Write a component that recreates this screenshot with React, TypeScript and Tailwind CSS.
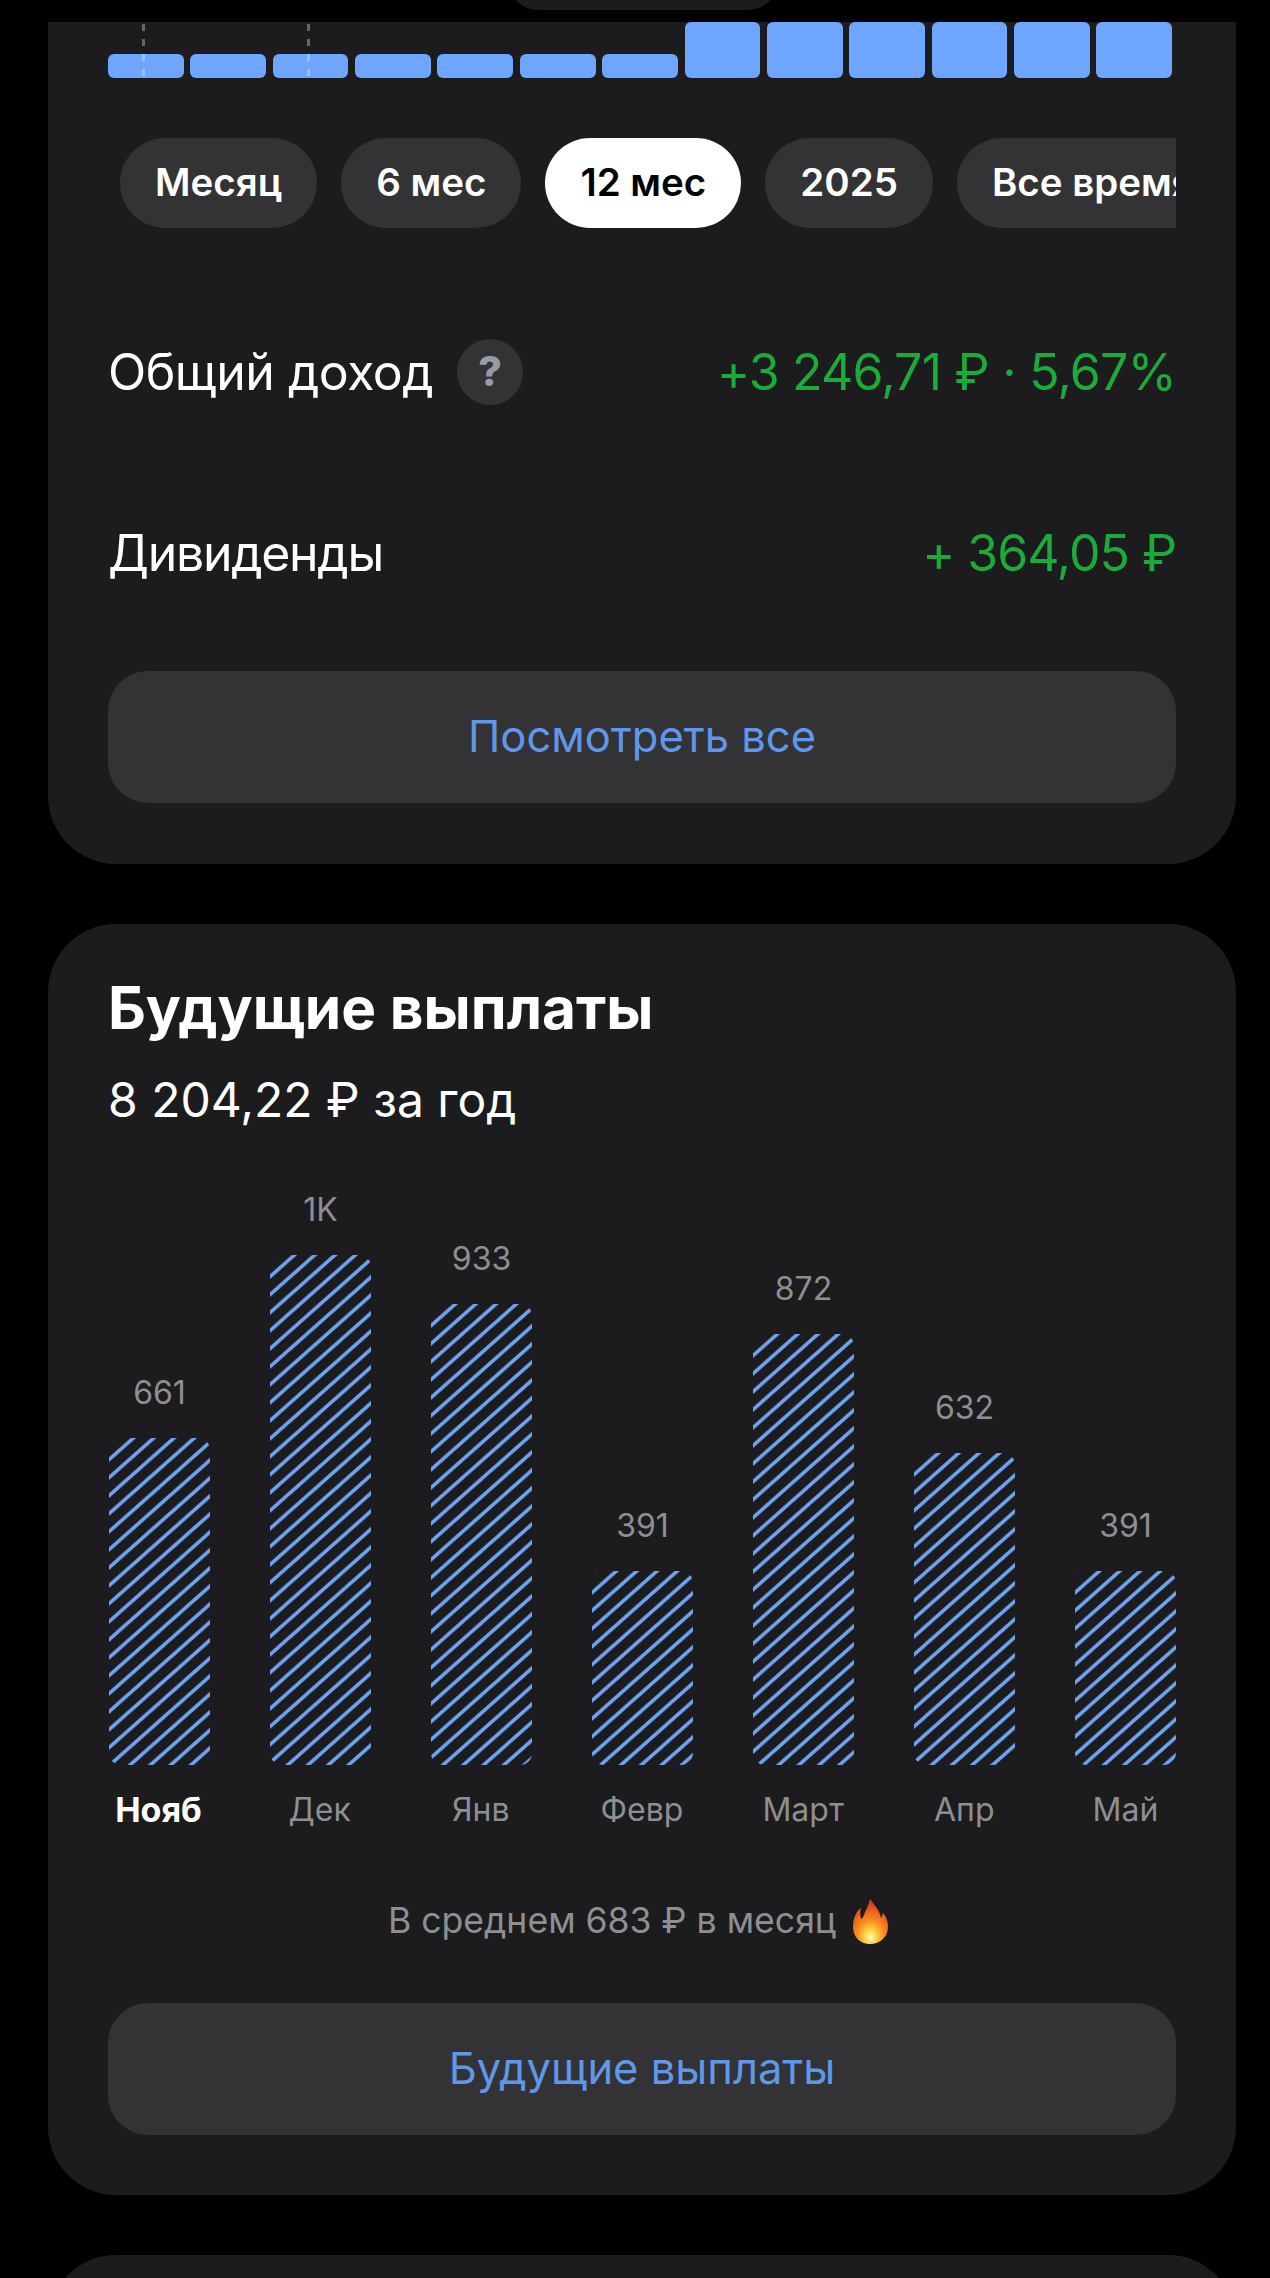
const chart = [
  { value: "661", month: "Нояб", height: 327, active: true },
  { value: "1K", month: "Дек", height: 510 },
  { value: "933", month: "Янв", height: 461 },
  { value: "391", month: "Февр", height: 194 },
  { value: "872", month: "Март", height: 431 },
  { value: "632", month: "Апр", height: 312 },
  { value: "391", month: "Май", height: 194 },
];

const periods = ["Месяц", "6 мес", "12 мес", "2025", "Все время"];

const HatchedBar = ({ height, id }: { height: number; id: string }) => (
  <svg width="101" height={height} viewBox={`0 0 101 ${height}`} className="rounded-[12px]">
    <defs>
      <pattern id={id} patternUnits="userSpaceOnUse" width="20.3" height="18">
        <line x1="-5" y1="8.13" x2="10" y2="-5.17" stroke="#6ea3f0" strokeWidth="3.6" />
        <line x1="-5" y1="26.13" x2="25" y2="-0.48" stroke="#6ea3f0" strokeWidth="3.6" />
      </pattern>
    </defs>
    <rect width="101" height={height} fill={`url(#${id})`} />
  </svg>
);

const FireIcon = () => (
  <svg width="37" height="45" viewBox="0 0 37 45">
    <defs>
      <radialGradient id="flame" cx="50%" cy="85%" r="78%">
        <stop offset="0%" stopColor="#fff8d0" />
        <stop offset="18%" stopColor="#ffdc4a" />
        <stop offset="48%" stopColor="#fb8f1f" />
        <stop offset="100%" stopColor="#d93a1c" />
      </radialGradient>
    </defs>
    <path
      d="M18 0c-1 5-3 9-5 13-1 3-2 6-4 7-1-3-1-7 0-11-5 3-8 11-8 19 0 10 7 17 17 17s18-7 18-17c0-6-2-11-5-14-1 2-1 4-2 5-1-7-6-12-11-19z"
      fill="url(#flame)"
    />
  </svg>
);

const DashLine = ({ className }: { className: string }) => (
  <svg width="3" height="54" className={className}>
    <line x1="1.5" y1="0" x2="1.5" y2="54" stroke="#ffffff" strokeOpacity="0.32" strokeWidth="3" strokeDasharray="7 8" />
  </svg>
);

const ActionButton = ({ label }: { label: string }) => (
  <div className="flex h-[132px] items-center justify-center rounded-[40px] bg-[#333336] text-[43.5px] text-[#5f97ea]">
    {label}
  </div>
);

export default function App() {
  return (
    <div className="h-[2278px] w-[1270px] overflow-hidden bg-black font-['Inter',sans-serif] text-white">
      <div className="-mt-[50px] ml-[508px] h-[60px] w-[270px] rounded-[34px] bg-[#1c1c1e]" />

      <section className="mt-[12px] mr-[34px] ml-12 h-[842px] rounded-b-[68px] bg-[#1c1c1e] px-[60px]">
        <div className="relative mr-[4px] flex h-[56px] items-end gap-[6.6px]">
          {Array.from({ length: 13 }, (_, i) => (
            <div
              key={i}
              className={`flex-1 rounded-[6px] bg-[#6ea5ff] ${i < 7 ? "h-[24px]" : "h-[56px]"}`}
            />
          ))}
          <DashLine className="absolute top-[2px] left-[34px]" />
          <DashLine className="absolute top-[2px] left-[199px]" />
        </div>

        <div className="mt-[60px] flex h-[90px] gap-[24px] overflow-hidden pl-[12px]">
          {periods.map((period) => (
            <div
              key={period}
              className={`flex shrink-0 items-center rounded-[45px] px-[35px] text-[38.5px] font-semibold ${
                period === "12 мес" ? "bg-white text-black" : "bg-[#333336] text-white"
              }`}
            >
              {period}
            </div>
          ))}
        </div>

        <div className="mt-[111px] flex h-[66px] items-center justify-between text-[50px]">
          <div className="flex items-center gap-[24px]">
            <span className="tracking-[-0.01em]">Общий доход</span>
            <span className="flex h-[66px] w-[66px] items-center justify-center rounded-full bg-[#333336] text-[41px] font-extrabold text-[#9a9aa4]">
              ?
            </span>
          </div>
          <span className="tracking-[-0.015em] text-[#1aab3a]">+3 246,71 ₽ · 5,67%</span>
        </div>

        <div className="mt-[115px] flex h-[66px] items-center justify-between text-[50px]">
          <span className="tracking-[-0.026em]">Дивиденды</span>
          <span className="tracking-[-0.02em] text-[#1aab3a]">+ 364,05 ₽</span>
        </div>

        <div className="mt-[85px]">
          <ActionButton label="Посмотреть все" />
        </div>
      </section>

      <section className="mt-[60px] mr-[34px] ml-12 h-[1271px] rounded-[68px] bg-[#1c1c1e] px-[60px] pt-[50px]">
        <h2 className="text-[58.5px] leading-[68px] font-bold">Будущие выплаты</h2>
        <p className="mt-[28px] text-[48px] leading-[60px]">8 204,22 ₽ за год</p>

        <div className="mt-[102px] flex h-[533px] items-end justify-between pl-[1px]">
          {chart.map((bar, i) => (
            <div key={i} className="flex w-[101px] flex-col items-center">
              <span className="mb-[25px] text-[32px] leading-[40px] text-[#8e8e93]">{bar.value}</span>
              <HatchedBar height={bar.height} id={`hatch-${i}`} />
            </div>
          ))}
        </div>

        <div className="mt-[24px] flex justify-between">
          {chart.map((bar) => (
            <span
              key={bar.month}
              className={`w-[101px] text-center leading-[42px] ${
                bar.active ? "text-[34px] font-bold text-white" : "text-[32px] text-[#8e8e93]"
              }`}
            >
              {bar.month}
            </span>
          ))}
        </div>

        <div className="mt-[66px] flex h-[48px] items-center justify-center gap-[16px] pr-[7px] text-[35.6px] text-[#8e8e93]">
          <span>В среднем 683 ₽ в месяц</span>
          <FireIcon />
        </div>

        <div className="mt-[58px]">
          <ActionButton label="Будущие выплаты" />
        </div>
      </section>

      <section className="mt-[60px] mr-[34px] ml-12 h-[200px] rounded-t-[68px] bg-[#1c1c1e]" />
    </div>
  );
}
